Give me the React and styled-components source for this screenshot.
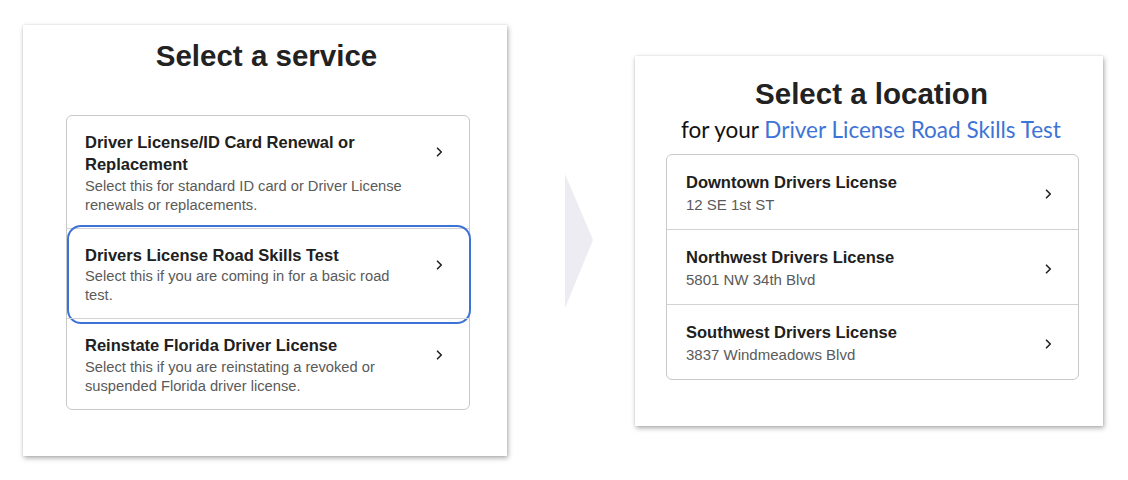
import React from "react";
import styled, { createGlobalStyle } from "styled-components";

const GlobalStyle = createGlobalStyle`
  html, body { margin: 0; padding: 0; background: #ffffff; }
  body { font-family: "Liberation Sans", Arial, sans-serif; color: #222; }
  * { box-sizing: border-box; }
`;

const Page = styled.div`
  width: 1128px;
  height: 480px;
  display: flex;
  align-items: flex-start;
  padding-left: 23px;
`;

const Card = styled.section`
  background: #fff;
  width: ${(p) => p.$width}px;
  margin-top: ${(p) => p.$top}px;
  padding: ${(p) => p.$padTop}px 0 46px;
  box-shadow: 1px 2px 5px rgba(0, 0, 0, 0.34), 0 0 1px rgba(0, 0, 0, 0.14);
  display: flex;
  flex-direction: column;
`;

const Title = styled.h1`
  margin: 0;
  font-family: "Liberation Sans", Arial, sans-serif;
  font-weight: 700;
  font-size: 29.5px;
  line-height: 1.2;
  color: #222;
  text-align: center;
  padding-left: ${(p) => p.$shift || 0}px;
`;

const Subtitle = styled.p`
  margin: 5px 0 0;
  font-family: Lato, "Liberation Sans", sans-serif;
  font-size: 22.5px;
  line-height: 27px;
  color: #111;
  text-align: center;
  padding-left: 4px;
`;

const Accent = styled.span`
  color: #3d74d6;
`;

const List = styled.ul`
  list-style: none;
  margin: ${(p) => p.$gap}px 0 0 ${(p) => p.$left}px;
  padding: 0;
  width: ${(p) => p.$width}px;
  border: 1px solid #c9c9c9;
  border-radius: 6px;
  background: #fff;
`;

const Row = styled.li`
  position: relative;
  display: flex;
  align-items: flex-start;
  padding: ${(p) => p.$padTop}px 26px ${(p) => p.$padBottom}px ${(p) => p.$padLeft}px;
  & + & { border-top: 1px solid #d3d3d3; }
`;

const Highlight = styled.div`
  position: absolute;
  top: -4px;
  left: 0;
  right: -2px;
  bottom: -6px;
  border: 2.5px solid #3d72d6;
  border-radius: 14px;
  pointer-events: none;
`;

const Text = styled.div`
  flex: 1;
  min-width: 0;
`;

const RowTitle = styled.div`
  font-weight: 700;
  font-size: 16.5px;
  line-height: ${(p) => p.$lh}px;
  color: #202020;
`;

const RowDesc = styled.div`
  margin-top: ${(p) => p.$gap}px;
  font-size: ${(p) => p.$size}px;
  line-height: ${(p) => p.$lh}px;
  color: #5a5a5a;
`;

const Chevron = styled.svg`
  flex: none;
  width: 7px;
  height: 10px;
  margin-top: ${(p) => p.$top}px;
  margin-left: 24px;
`;

const Arrow = styled.svg`
  flex: none;
  width: 28px;
  height: 134px;
  margin: 174px 42px 0 58px;
`;

const ChevronIcon = ({ top }) => (
  <Chevron $top={top} viewBox="0 0 7 10">
    <path d="M1.5 1.2 L5.3 5 L1.5 8.8" fill="none" stroke="#222" strokeWidth="1.6" strokeLinecap="round" strokeLinejoin="round" />
  </Chevron>
);

const services = [
  {
    title: "Driver License/ID Card Renewal or Replacement",
    desc: "Select this for standard ID card or Driver License renewals or replacements.",
  },
  {
    title: "Drivers License Road Skills Test",
    desc: "Select this if you are coming in for a basic road test.",
    selected: true,
  },
  {
    title: "Reinstate Florida Driver License",
    desc: "Select this if you are reinstating a revoked or suspended Florida driver license.",
  },
];

const locations = [
  { title: "Downtown Drivers License", addr: "12 SE 1st ST" },
  { title: "Northwest Drivers License", addr: "5801 NW 34th Blvd" },
  { title: "Southwest Drivers License", addr: "3837 Windmeadows Blvd" },
];

export default function App() {
  return (
    <>
      <GlobalStyle />
      <Page>
        <Card $width={484} $top={25} $padTop={13}>
          <Title $shift={3}>Select a service</Title>
          <List $gap={42} $left={43} $width={404}>
            {services.map((s) => (
              <Row key={s.title} $padTop={15} $padBottom={13} $padLeft={18}>
                {s.selected && <Highlight />}
                <Text>
                  <RowTitle $lh={22}>{s.title}</RowTitle>
                  <RowDesc $gap={1.5} $size={14.7} $lh={19}>{s.desc}</RowDesc>
                </Text>
                <ChevronIcon top={16} />
              </Row>
            ))}
          </List>
        </Card>
        <Arrow viewBox="0 0 28 134">
          <polygon points="0,0 28,66 0,134" fill="#ececf2" />
        </Arrow>
        <Card $width={468} $top={56} $padTop={20}>
          <Title $shift={5}>Select a location</Title>
          <Subtitle>
            for your <Accent>Driver License Road Skills Test</Accent>
          </Subtitle>
          <List $gap={11} $left={31} $width={413}>
            {locations.map((l) => (
              <Row key={l.title} $padTop={17} $padBottom={15} $padLeft={19}>
                <Text>
                  <RowTitle $lh={21}>{l.title}</RowTitle>
                  <RowDesc $gap={3} $size={15} $lh={18}>{l.addr}</RowDesc>
                </Text>
                <ChevronIcon top={17} />
              </Row>
            ))}
          </List>
        </Card>
      </Page>
    </>
  );
}
